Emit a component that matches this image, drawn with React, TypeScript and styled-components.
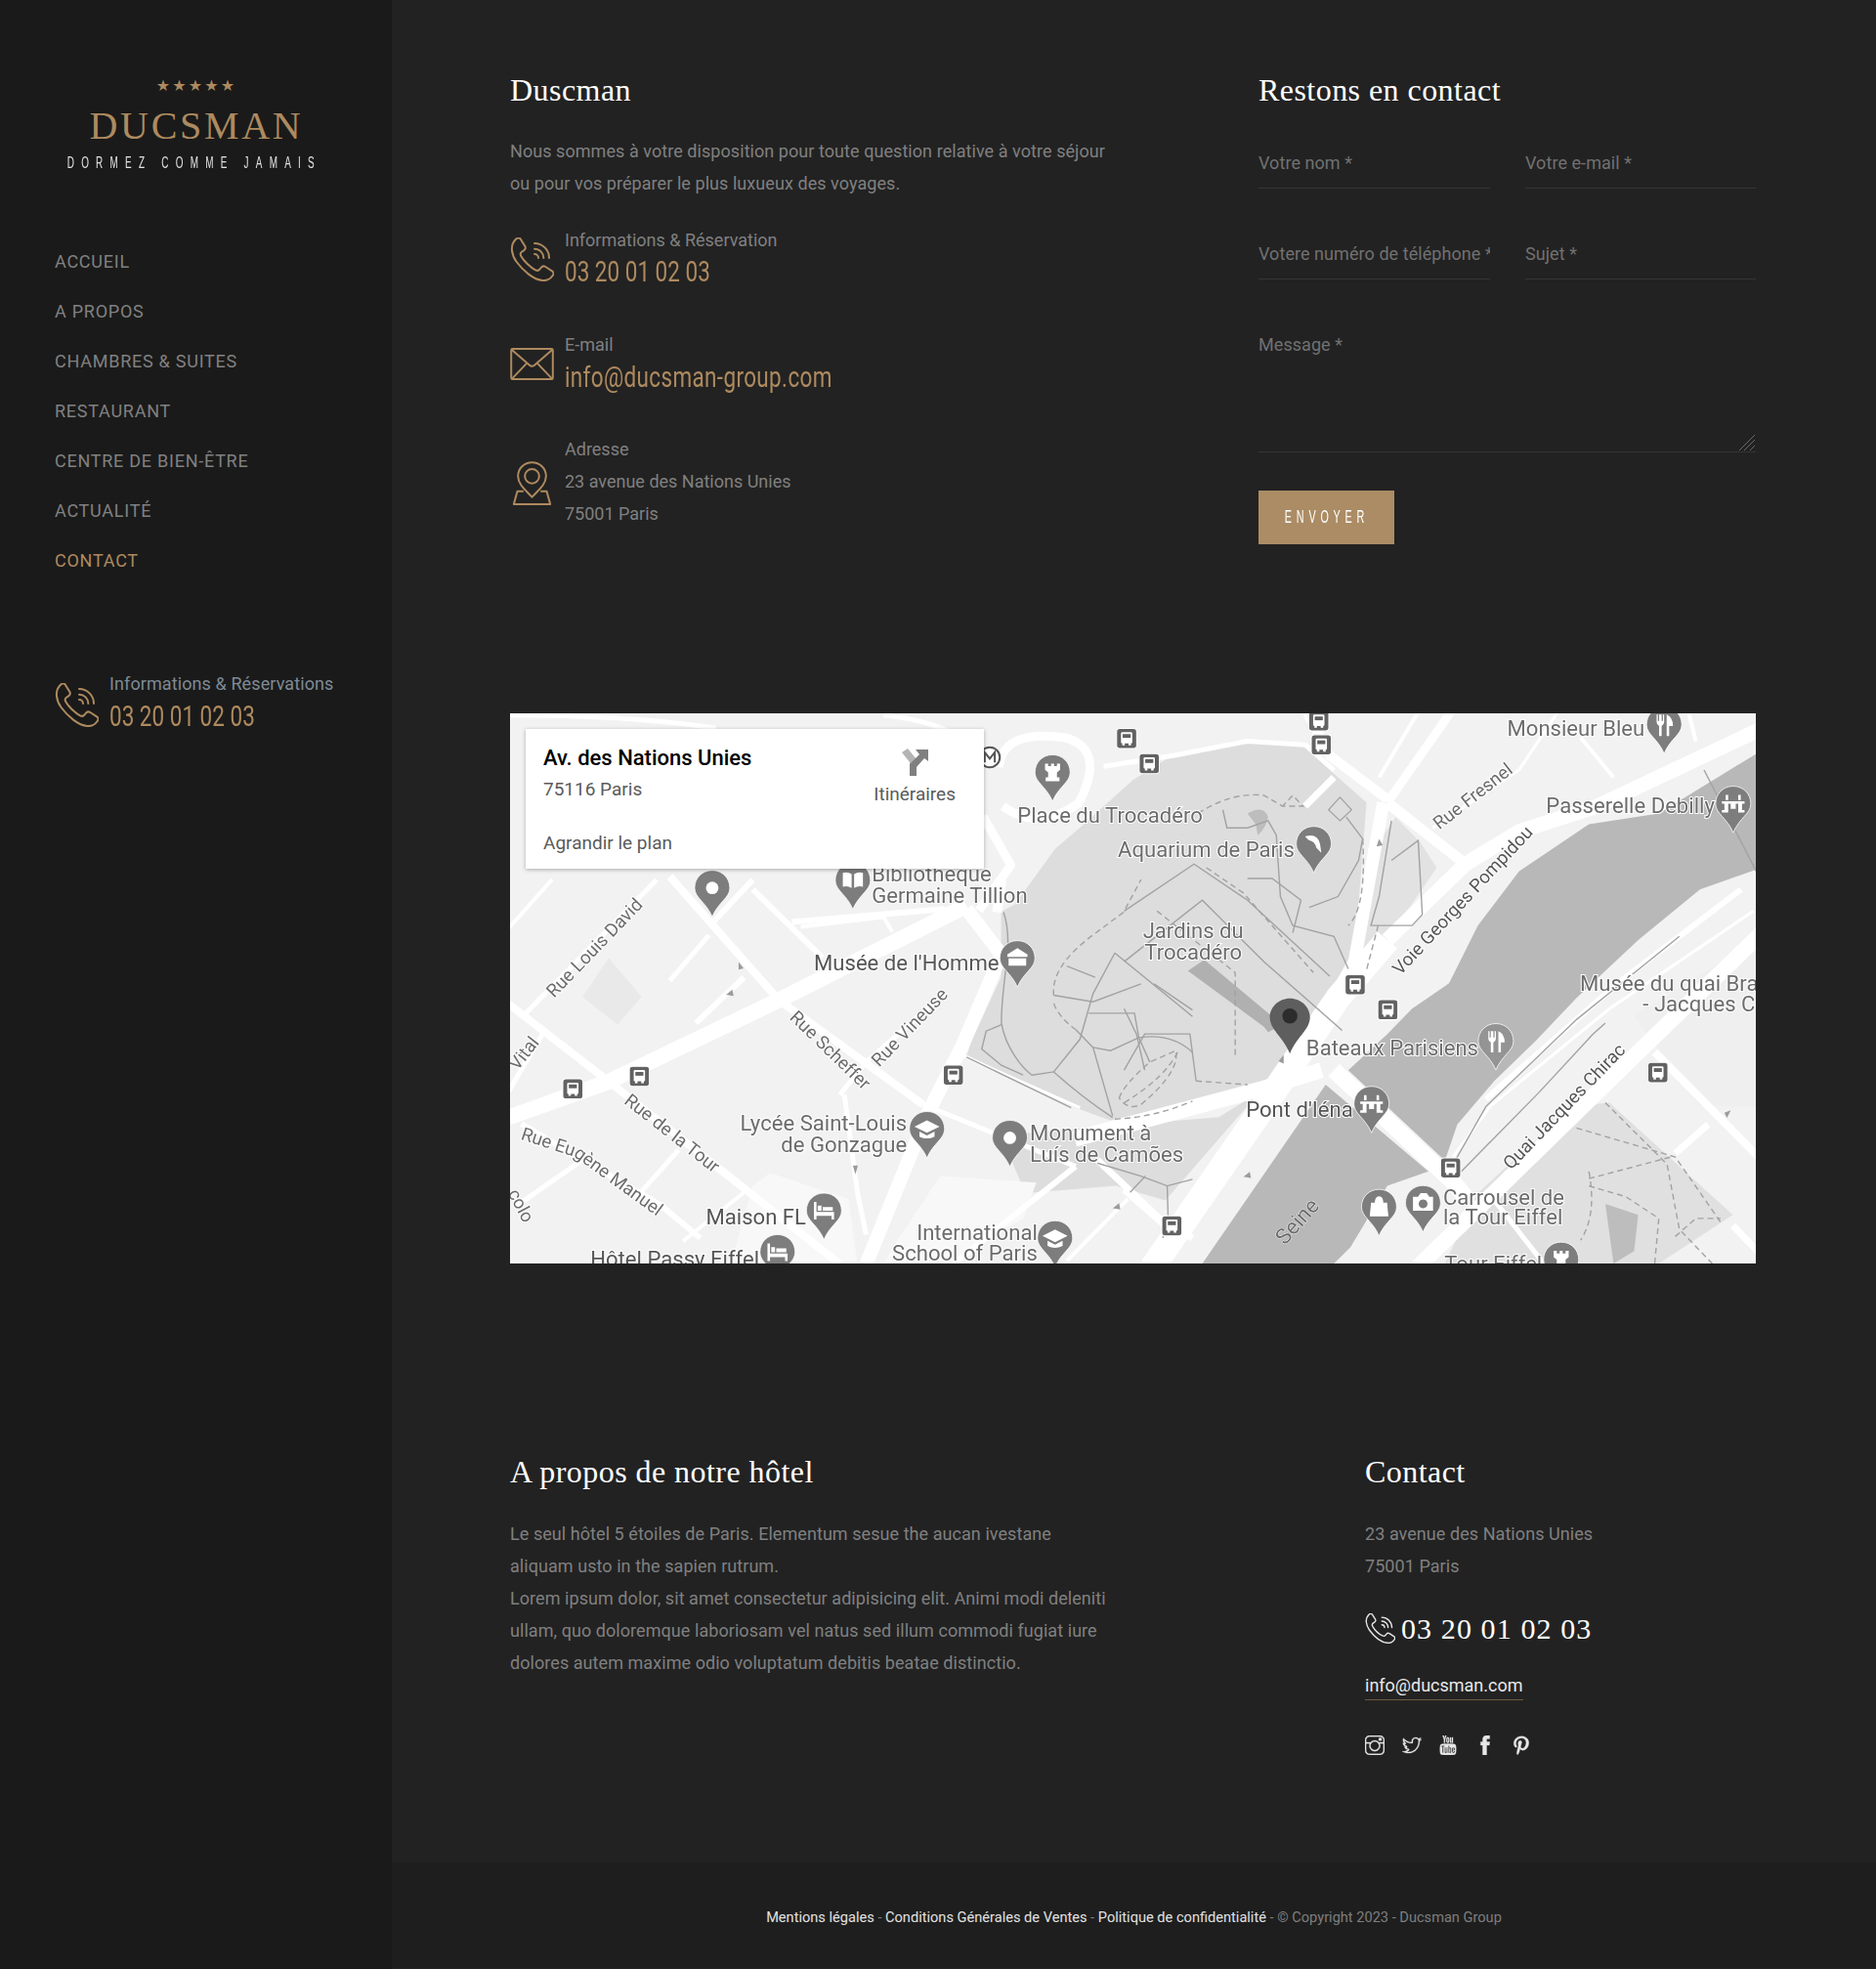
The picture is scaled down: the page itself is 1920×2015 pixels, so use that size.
import React from "react";
import styled, { createGlobalStyle } from "styled-components";
import { TfiInstagram, TfiTwitter, TfiYoutube, TfiFacebook, TfiPinterest } from "react-icons/tfi";

const GOLD = "#ae8a5f";

const GlobalStyle = createGlobalStyle`
  html, body { margin: 0; padding: 0; background: #222222; }
  * { box-sizing: border-box; }
  body { font-family: Roboto, "Liberation Sans", sans-serif; color: #808080; }
`;

const PhoneIcon = ({ color, size }: { color: string; size: number }) => (
  <svg width={size} height={size} viewBox="0 0 135 135" fill="none" stroke={color} strokeWidth={6} strokeLinejoin="round" strokeLinecap="round">
    <path d="M18 5 C24 0 30 1 33 6 L46 27 C49 32 47 37 42 40 L35 45 C31 48 31 52 34 58 C42 72 62 92 78 100 C84 103 88 102 91 98 L96 92 C99 88 104 87 109 90 L129 103 C134 107 135 112 131 117 C124 127 113 133 100 132 C72 130 40 102 20 75 C5 54 -2 24 18 5 Z" />
    <path d="M75 18 A45 45 0 0 1 120 63" />
    <path d="M75 35 A28 28 0 0 1 103 63" />
    <path d="M75 51 A12 12 0 0 1 87 63" />
  </svg>
);

const MailIcon = () => (
  <svg width="45" height="33" viewBox="0 0 135 100" fill="none" stroke={GOLD} strokeWidth={6} strokeLinejoin="round" strokeLinecap="round">
    <rect x="3" y="3" width="129" height="94" rx="4" />
    <path d="M5 6 L60 54 Q67 60 75 54 L130 6" />
    <path d="M6 95 L50 49" />
    <path d="M129 95 L85 49" />
  </svg>
);

const LocationIcon = () => (
  <svg width="45" height="46" viewBox="-7.5 0 135 138" fill="none" stroke={GOLD} strokeWidth={6} strokeLinejoin="round">
    <circle cx="60" cy="46" r="22" />
    <path d="M60 4 C36 4 17 22 17 46 C17 72 42 90 60 110 C78 90 103 72 103 46 C103 22 84 4 60 4 Z" />
    <path d="M34 92 L15 92 L4 132 L116 132 L105 92 L86 92" />
  </svg>
);

const Page = styled.div`
  display: flex;
  width: 1920px;
  height: 2015px;
  overflow: hidden;
  background: #222222;
`;

const Sidebar = styled.aside`
  flex: 0 0 401px;
  background: #1a1a1a;
  padding: 74px 0 0 56px;
`;

const Logo = styled.div`
  width: 288px;
  display: flex;
  flex-direction: column;
  align-items: center;
`;

const Stars = styled.div`
  color: ${GOLD};
  font-family: "DejaVu Sans", sans-serif;
  font-size: 16px;
  line-height: 28px;
  letter-spacing: 2.2px;
  padding-left: 2px;
`;

const Brand = styled.div`
  font-family: "Liberation Serif", serif;
  color: ${GOLD};
  font-size: 40px;
  line-height: 46px;
  letter-spacing: 2.7px;
  margin-top: 4px;
  padding-left: 2px;
`;

const Tagline = styled.div`
  color: #e2e2e2;
  font-family: "Liberation Sans", sans-serif;
  font-size: 16px;
  line-height: 20px;
  letter-spacing: 11.7px;
  white-space: nowrap;
  margin: 5px 3px 0 0;
  transform: scaleX(0.62);
`;

const Nav = styled.nav`
  display: flex;
  flex-direction: column;
  margin-top: 65px;
`;

const NavItem = styled.a<{ $active?: boolean }>`
  font-size: 18px;
  line-height: 51px;
  letter-spacing: 0.75px;
  color: ${(p) => (p.$active ? GOLD : "#818181")};
`;

const CallBox = styled.div<{ $top?: number }>`
  display: flex;
  gap: 11px;
  align-items: center;
  margin-top: ${(p) => p.$top ?? 0}px;
`;

const CallLabel = styled.div`
  font-size: 18px;
  line-height: 24px;
  letter-spacing: 0.1px;
  color: #7f8a94;
  white-space: nowrap;
`;

const Narrow = styled.div`
  font-size: 30px;
  line-height: 42px;
  color: ${GOLD};
  white-space: nowrap;
  transform: scaleX(0.75);
  transform-origin: left center;
`;

const Main = styled.main`
  flex: 1;
  display: flex;
  flex-direction: column;
  min-width: 0;
`;

const Content = styled.div`
  flex: 1;
  padding: 70px 122px 0 121px;
  display: flex;
  flex-direction: column;
`;

const ContactRow = styled.section`
  display: grid;
  grid-template-columns: 766px 509px;
  height: 660px;
`;

const Heading = styled.h2`
  margin: 0;
  font-family: "Liberation Serif", serif;
  font-weight: 400;
  font-size: 32px;
  line-height: 44px;
  letter-spacing: 0.45px;
  color: #ffffff;
`;

const Paragraph = styled.p`
  margin: 0;
  font-size: 18px;
  line-height: 33px;
  letter-spacing: 0.06px;
  color: #808080;
`;

const Intro = styled(Paragraph)`
  margin-top: 24px;
  width: 640px;
`;

const InfoItem = styled.div`
  display: flex;
  gap: 11px;
  align-items: center;
  width: 500px;
  svg {
    flex: 0 0 auto;
    margin-top: 4px;
  }
`;

const InfoText = styled.div`
  font-size: 18px;
  line-height: 33px;
  color: #808080;
  display: flex;
  flex-direction: column;
`;

const InfoList = styled.div`
  display: flex;
  flex-direction: column;
  gap: 38.5px;
  margin-top: 25px;
`;

const InfoValue = styled(Narrow)`
  line-height: 38px;
  margin-top: -3px;
`;

const EmailValue = styled(InfoValue)`
  letter-spacing: 0.47px;
  margin-top: -2px;
`;

const FormGrid = styled.form`
  display: grid;
  grid-template-columns: 237px 236px;
  column-gap: 36px;
  row-gap: 40px;
  margin-top: 26px;
`;

const Field = styled.input`
  width: 100%;
  height: 53px;
  background: transparent;
  border: 0;
  border-bottom: 1px solid #353535;
  outline: none;
  padding: 0;
  font-family: inherit;
  font-size: 18px;
  letter-spacing: 0.06px;
  color: #808080;
  &::placeholder { color: #717171; opacity: 1; }
`;

const MessageWrap = styled.div`
  grid-column: 1 / 3;
  position: relative;
`;

const Message = styled.textarea`
  width: 100%;
  height: 137px;
  display: block;
  resize: none;
  background: transparent;
  border: 0;
  border-bottom: 1px solid #353535;
  outline: none;
  padding: 16px 0 0;
  font-family: inherit;
  font-size: 18px;
  letter-spacing: 0.06px;
  &::placeholder { color: #717171; opacity: 1; }
`;

const ResizeGrip = styled.svg`
  position: absolute;
  right: 0;
  bottom: 1px;
`;

const SendButton = styled.button`
  display: block;
  width: 139px;
  height: 55px;
  margin-top: 39px;
  border: 0;
  background: #ab8c65;
  color: #ffffff;
  padding: 0 0 0 2px;
`;

const SendLabel = styled.span`
  display: inline-block;
  font-family: "Liberation Sans", sans-serif;
  font-size: 18px;
  letter-spacing: 8px;
  transform: scaleX(0.6);
  white-space: nowrap;
  margin: 0 -30px;
`;

const MapBox = styled.div`
  position: relative;
  width: 1275px;
  height: 563px;
  background: #f2f2f2;
  overflow: hidden;
`;

const MapCard = styled.div`
  position: absolute;
  left: 16px;
  top: 16px;
  width: 469px;
  height: 143px;
  background: #ffffff;
  box-shadow: 0 1px 4px rgba(0, 0, 0, 0.3);
  padding: 16px 18px;
  font-family: Roboto, sans-serif;
`;

const CardTitle = styled.div`
  font-size: 22px;
  font-weight: 500;
  line-height: 28px;
  color: #000000;
`;

const CardLine = styled.div`
  font-size: 19px;
  line-height: 24px;
  margin-top: 6px;
  color: #5b5b5b;
`;

const CardLink = styled(CardLine)`
  margin-top: 31px;
`;

const Directions = styled.div`
  position: absolute;
  right: 29px;
  top: 18px;
  display: flex;
  flex-direction: column;
  align-items: center;
  gap: 7px;
  font-size: 19px;
  color: #5b5b5b;
`;

const FooterRow = styled.section`
  display: grid;
  grid-template-columns: 875px 400px;
  margin-top: 191px;
`;

const AboutText = styled(Paragraph)`
  margin-top: 25px;
  width: 660px;
`;

const ContactText = styled(AboutText)`
  width: 400px;
`;

const BigPhone = styled.div`
  display: flex;
  align-items: center;
  gap: 6px;
  margin-top: 31px;
  font-family: "Liberation Serif", serif;
  font-size: 30px;
  line-height: 33px;
  letter-spacing: 1.1px;
  color: #ffffff;
`;

const MailLink = styled.a`
  display: inline-block;
  margin-top: 30px;
  padding-bottom: 2px;
  font-size: 18px;
  line-height: 24px;
  color: #e8e8e8;
  border-bottom: 1px solid #6d5a42;
`;

const Socials = styled.div`
  display: flex;
  gap: 17.5px;
  margin-top: 36px;
  color: #e6e6e6;
  font-size: 20px;
  svg {
    display: block;
    stroke: currentColor;
    stroke-width: 0.25;
  }
`;

const BottomBar = styled.footer`
  flex: 0 0 108px;
  background: #1e1e1e;
  margin-bottom: 1px;
  display: flex;
  align-items: center;
  justify-content: center;
  padding-top: 4px;
  font-size: 14.6px;
  color: #7e7e7e;
  white-space: nowrap;
`;

const BarLink = styled.a`
  color: #e2e2e2;
`;

const Land = "#f2f2f2";
const Park = "#dddddd";
const Water = "#b8b8b8";
const Line = "#a2a2a2";

const Z4 = "translate(404.7 564.2) scale(.3175 .2594)";
const Z6 = "translate(404.7 700.4) scale(.3474 .2594)";
const Z7 = "translate(895 564.2) scale(.3275 .2879)";

const Road = ({ d, w }: { d: string; w: number }) => (
  <path d={d} fill="none" stroke="#ffffff" strokeWidth={w} vectorEffect="non-scaling-stroke" strokeLinejoin="round" />
);

const Trail = ({ d, dash }: { d: string; dash?: boolean }) => (
  <path d={d} fill="none" stroke={Line} strokeWidth={1.4} strokeDasharray={dash ? "6 4" : undefined} vectorEffect="non-scaling-stroke" />
);

const Pin = ({ x, y, glyph, shade = "#7d7d7d" }: { x: number; y: number; glyph?: string; shade?: string }) => (
  <g transform={`translate(${x} ${y})`}>
    <path d="M0 -14 C-8 -14 -14 -8 -14 0 C-14 8 -5 11 0 23 C5 11 14 8 14 0 C14 -8 8 -14 0 -14 Z" fill={shade} stroke="#ffffff" strokeWidth={0.6} />
    {glyph === "dot" && <circle r={5} fill="#ffffff" />}
    {glyph === "rook" && <path d="M-6 -7 H-3.5 V-5 H-1.2 V-7 H1.2 V-5 H3.5 V-7 H6 V-2 L3.5 0 V4 H5.5 V7 H-5.5 V4 H-3.5 V0 L-6 -2 Z" fill="#ffffff" />}
    {glyph === "book" && <path d="M-8 -6 Q-4 -7 -1 -5 V6 Q-4 4 -8 5 Z M8 -6 Q4 -7 1 -5 V6 Q4 4 8 5 Z" fill="#ffffff" />}
    {glyph === "museum" && <path d="M0 -8 L8 -3 V-1 H-8 V-3 Z M-7 0 H7 V6 H-7 Z" fill="#ffffff" />}
    {glyph === "grad" && <path d="M0 -7 L10 -2 L0 3 L-10 -2 Z M-6 2 L0 5 L6 2 V6 Q0 9 -6 6 Z" fill="#ffffff" />}
    {glyph === "bed" && <path d="M-8 -7 H-6 V1 H8 V7 H6 V4 H-6 V7 H-8 Z M-5 -4 H-2 V0 H-5 Z M-1 -3 H7 V0 H-1 Z" fill="#ffffff" />}
    {glyph === "fork" && <path d="M-6 -8 V-2 Q-6 0 -4 1 V9 H-2 V1 Q0 0 0 -2 V-8 H-1 V-3 H-2 V-8 H-4 V-3 H-5 V-8 Z M2 9 V-8 Q7 -6 7 1 H4 V9 Z" fill="#ffffff" />}
    {glyph === "bridge" && <path d="M-9 -2 H9 V0 H7 V5 H9 V7 H4 V0 H2 V4 H-2 V0 H-4 V7 H-9 V5 H-7 V0 H-9 Z M-6 -7 H-4 V-3 H-6 Z M4 -7 H6 V-3 H4 Z" fill="#ffffff" />}
    {glyph === "shop" && <path d="M-6 -3 H6 L7 7 H-7 Z M-3 -3 Q-3 -8 0 -8 Q3 -8 3 -3" fill="#ffffff" stroke="#ffffff" strokeWidth={0.8} />}
    {glyph === "camera" && <path d="M-8 -5 H-4 L-2 -8 H3 L5 -5 H8 V6 H-8 Z M0 -3 A3.5 3.5 0 1 0 0.1 -3 Z" fill="#ffffff" fillRule="evenodd" />}
    {glyph === "dolphin" && <path d="M-7 -6 Q3 -9 5 0 L6 7 L2 3 Q1 -2 -4 -3 Z" fill="#ffffff" />}
  </g>
);

const Bus = ({ x, y }: { x: number; y: number }) => (
  <g transform={`translate(${x} ${y})`}>
    <rect x={-8} y={-8} width={16} height={16} rx={2.5} fill="#626262" stroke="#ffffff" strokeWidth={0.8} />
    <rect x={-4.5} y={-5} width={9} height={9} rx={1} fill="#ffffff" />
    <rect x={-3.2} y={-3.5} width={6.4} height={3} fill="#626262" />
    <rect x={-3.5} y={3.5} width={2} height={2} fill="#ffffff" />
    <rect x={1.5} y={3.5} width={2} height={2} fill="#ffffff" />
  </g>
);

const Label = styled.text<{ $dark?: boolean }>`
  font-family: Roboto, sans-serif;
  font-size: 17.2px;
  fill: ${(p) => (p.$dark ? "#555555" : "#6c6c6c")};
  stroke: #ffffff;
  stroke-width: 1.6px;
  paint-order: stroke;
`;

const Street = styled(Label)`
  font-size: 14.5px;
`;

const MapDrawing = () => (
  <svg width="1275" height="563" viewBox="406 568 992 438" style={{ display: "block", filter: "blur(0.45px)" }}>
    <rect x="406" y="568" width="992" height="438" fill={Land} />

    {/* parks and water, traced in the crop coordinates */}
    <path d="M808 720 L840 676 L862 657 L902 621 L934 601 L993 590 L1039 593 L1062 616 L1088 639 L1078 766 L1059 797 L1006 864 L884 892 L856 882 L770 840 L773 830 L797 778 L797 726 Z" fill={Park} />
    <g transform={Z7}>
      <path d="M-300 1180 L230 1130 L330 1060 L100 1360 L-20 1320 L-240 1340 Z" fill={Park} />
      <path d="M660 300 L720 370 L760 440 L640 640 L570 740 L600 400 Z" fill="#e2e2e2" />
      <path d="M1090 1100 L1180 1090 L1480 1400 L1300 1535 L780 1535 L860 1340 Z" fill="#e0e0e0" />
      <path d="M1240 850 L1537 640 L1537 1100 L1400 1100 Z" fill="#efefef" />
      <path d="M545 1000 L640 900 L700 830 L790 760 L860 600 L960 450 L1130 320 L1300 290 L1537 125 L1537 445 L1400 500 L1250 640 L1100 800 L1000 920 L900 1030 L810 1150 L780 1250 Z" fill={Water} />
      <path d="M190 1535 L490 1040 L740 1280 L640 1320 L550 1490 L510 1535 Z" fill={Water} />
      <path d="M155 725 L195 695 L385 875 L350 895 L340 880 Z" fill="#b0b0b0" />
      <path d="M300 290 Q340 265 350 300 Q345 330 325 350 L320 320 Z" fill="#bdbdbd" />
      <path d="M1170 1370 L1250 1400 L1240 1500 L1190 1535 Z" fill="#bdbdbd" />
    </g>
    <g transform={Z6}>
      <path d="M170 360 L230 240 L305 360 L250 445 Z" fill="#e9e9e9" />
      <path d="M560 940 L600 900 L780 980 L800 1180 L510 1180 Z" fill="#f8f8f8" />
      <path d="M880 1130 L990 910 L1210 930 L1180 1040 L1000 1180 L860 1180 Z" fill="#f8f8f8" />
    </g>

    {/* streets */}
    <g transform={Z7}>
      <Road d="M60 1560 L340 1100 L520 800 L640 640" w={26} />
      <Road d="M640 640 L830 430 L960 340 L1150 270 L1560 50" w={15} />
      <Road d="M630 260 L560 700 L500 820 L400 1000" w={13} />
      <Road d="M640 250 L500 130 L440 0" w={10} />
      <Road d="M640 260 L830 430" w={11} />
      <Road d="M640 260 L800 0" w={9} />
      <Road d="M720 0 L620 190" w={4} />
      <Road d="M-50 160 L120 130 L300 90 L440 100 L510 170" w={5} />
      <Road d="M510 190 L440 270" w={7} />
      <Road d="M510 1000 L800 1310 L830 1350" w={17} />
      <Road d="M-120 1190 L340 1050 L480 1000" w={16} />
      <Road d="M700 1560 L1250 950 L1560 610" w={16} />
      <Road d="M880 1080 L940 1020 L1200 760 L1500 500" w={6} />
      <Road d="M800 1240 L890 1100 L1180 830 L1530 560" w={3} />
      <Road d="M1290 950 L1560 1260" w={8} />
      <Road d="M1420 1150 L1340 1230" w={7} />
      <Road d="M1110 80 L1190 190" w={4} />
      <Road d="M1370 0 L1390 90" w={4} />
      <Road d="M960 170 L1060 0" w={3} />
      <Road d="M750 330 L960 170" w={3} />
      <Road d="M1480 1430 L1540 1500" w={7} />
      <Road d="M0 1330 L100 1430 L140 1480" w={7} />
      <Road d="M880 1330 L1020 1535" w={5} />
    </g>
    <g transform={Z6}>
      <Road d="M0 730 L230 620 L620 370 L1050 80" w={16} />
      <Road d="M1050 90 L1130 230 L1040 510 L960 720 L820 1180" w={14} />
      <Road d="M1130 0 L1120 100" w={10} />
      <Road d="M370 -10 L620 370 L950 690" w={8} />
      <Road d="M950 690 L1300 880" w={5} />
      <Road d="M-20 360 L230 620 L760 1180" w={8} />
      <Road d="M340 0 L40 410" w={5} />
      <Road d="M100 0 L0 150" w={4} />
      <Road d="M560 0 L470 130" w={6} />
      <Road d="M560 30 L720 240" w={6} />
      <Road d="M650 130 L1000 90" w={6} />
      <Road d="M670 145 L860 115 L880 160" w={4} />
      <Road d="M540 300 L430 440" w={6} />
      <Road d="M460 170 L370 310" w={5} />
      <Road d="M760 660 L820 560 L1000 350" w={5} />
      <Road d="M770 660 L800 960 L820 1090" w={5} />
      <Road d="M80 470 L0 650" w={5} />
      <Road d="M30 750 L350 1000 L440 1100" w={6} />
      <Road d="M170 860 L20 1000" w={5} />
      <Road d="M390 830 L290 980" w={5} />
      <Road d="M540 960 L400 1110" w={4} />
      <Road d="M1300 880 L1150 1040 L1020 1180" w={6} />
      <Road d="M1350 860 L1500 1050 L1568 1100" w={7} />
      <Road d="M1420 980 L1280 1170" w={4} />
      <Road d="M1040 540 L1310 700" w={3} />
    </g>
    <g transform={Z4}>
      <Road d="M1190 330 L1260 480 L1180 620" w={9} />
      <Road d="M1230 180 Q1240 60 1400 90 Q1500 130 1430 290 Q1330 380 1240 300" w={9} />
      <Road d="M0 20 Q300 20 520 60" w={5} />
      <Road d="M940 20 Q1100 40 1180 130" w={5} />
    </g>

    {/* garden paths */}
    <g transform={Z6}>
      <Trail d="M1135 100 C1160 200 1130 300 1130 440 C1140 520 1180 580 1200 600 L1250 590 C1300 650 1340 690 1385 730" />
      <Trail d="M1130 445 L1095 465 L1085 520 L1130 570 L1180 600" />
      <Trail d="M1250 590 L1310 490 L1340 350 L1390 225" />
      <Trail d="M1250 355 L1340 375 L1450 320" />
      <Trail d="M1280 265 L1345 300" />
      <Trail d="M1330 410 L1435 410 L1445 485 L1470 560" />
      <Trail d="M1300 460 L1340 515 L1385 725" />
      <Trail d="M1340 515 L1380 525 L1445 485 Q1520 470 1568 530" />
      <Trail d="M1250 355 C1245 290 1280 230 1340 170 L1410 100 L1450 0" dash />
      <Trail d="M1250 380 Q1260 420 1300 460" dash />
      <Trail d="M1400 670 Q1410 630 1470 560 L1530 525 Q1540 590 1450 690 Q1420 710 1400 670 Z" dash />
      <Trail d="M1390 735 Q1480 730 1568 680" dash />
      <Trail d="M1390 225 L1568 420" />
      <Trail d="M1480 320 L1568 400" />
      <Trail d="M1050 545 L1290 700" />
      <Trail d="M1510 940 L1512 1030 L1500 1100" />
      <Trail d="M1460 910 L1425 960" />
      <Trail d="M1350 870 L1450 910 L1510 940 L1568 920" />
    </g>
    <g transform={Z7}>
      <Trail d="M180 290 Q260 230 340 240 L385 270 L435 270 L410 240 L385 270" dash />
      <Trail d="M240 280 L250 330 L300 330 L350 310 L370 350 L380 520 L410 600 L510 630 L545 720" />
      <Trail d="M300 470 L360 470 L430 530 L410 620" />
      <path d="M497 280 L525 245 L553 280 L525 310 Z" fill="none" stroke={Line} strokeWidth={1.2} vectorEffect="non-scaling-stroke" />
      <Trail d="M540 300 L580 360 L570 420 L520 520 L450 550" />
      <Trail d="M580 360 Q590 550 545 600" dash />
      <Trail d="M0 560 L170 430 L300 530 L500 740" />
      <Trail d="M0 700 L190 530 L340 700 L530 890" />
      <Trail d="M200 440 L290 510 L460 730" dash />
      <Trail d="M80 560 L270 730 L270 960" dash />
      <Trail d="M0 830 L30 900 L50 1000" />
      <Trail d="M0 1000 L50 900 L160 900 L175 1030" />
      <Trail d="M0 1090 Q100 1020 130 950" dash />
      <Trail d="M175 1030 L300 1040" dash />
      <Trail d="M650 310 L620 520 L600 600 L700 600 L725 570" />
      <Trail d="M650 420 L715 365 L725 570" />
      <Trail d="M590 720 L620 590" dash />
      <Trail d="M1100 1160 L1340 1240 L1450 1420" dash />
      <Trail d="M1170 1090 L1320 1260 L1350 1440 L1430 1535" dash />
      <Trail d="M1130 1300 L1330 1240" dash />
      <Trail d="M1130 1320 L1220 1350 L1300 1410 L1290 1535" dash />
      <Trail d="M1130 1280 Q1150 1400 1110 1470" dash />
      <Trail d="M1340 1460 L1390 1410 L1450 1410" dash />
      <Trail d="M820 1280 L1010 1060 L1140 900 L1170 870" />
      <Trail d="M780 1300 L880 1100 L1100 860 L1350 630" />
      <Trail d="M1410 170 L1537 450" />
    </g>

    {/* grey arrows on one-way streets */}
    <g fill="#9b9b9b">
      <path d="M588 766 l4 5 l-4 1 z" />
      <path d="M578 792 l5 -4 l1 5 z" />
      <path d="M1098 668 l3 5 l-5 1 z" />
      <path d="M990 937 l5 -4 l1 5 z" />
      <path d="M886 962 l5 -4 l1 5 z" />
      <path d="M679 928 l4 0 l-2 7 z" />
      <path d="M1378 884 l-5 2 l2 4 z" />
      <path d="M1022 840 l-4 5 l4 2 z" />
    </g>

    {/* bus stops */}
    {[[897, 588], [915, 608], [1050, 574], [1052, 593], [1079, 784], [1105, 804], [1155, 930], [1320, 854], [933, 976], [759, 856], [509, 857], [456, 867]].map(([x, y]) => (
      <Bus key={`${x}-${y}`} x={x} y={y} />
    ))}
    <g transform="translate(788 603)">
      <circle r={8} fill="#ffffff" stroke="#555555" strokeWidth={1.6} />
      <path d="M-4 4 V-4 L0 1 L4 -4 V4" fill="none" stroke="#555555" strokeWidth={1.6} />
    </g>

    {/* points of interest */}
    <Pin x={838} y={615} glyph="rook" />
    <Pin x={1046} y={672} glyph="dolphin" />
    <Pin x={567} y={707} glyph="dot" />
    <Pin x={679} y={701} glyph="book" />
    <Pin x={810} y={763} glyph="museum" />
    <Pin x={738} y={899} glyph="grad" />
    <Pin x={804} y={906} glyph="dot" />
    <Pin x={656} y={964} glyph="bed" />
    <Pin x={619} y={997} glyph="bed" />
    <Pin x={840} y={986} glyph="grad" />
    <Pin x={1191} y={829} glyph="fork" shade="#949494" />
    <Pin x={1092} y={879} glyph="bridge" />
    <Pin x={1098} y={961} glyph="shop" />
    <Pin x={1133} y={958} glyph="camera" />
    <Pin x={1243} y={1003} glyph="rook" />
    <Pin x={1325} y={577} glyph="fork" />
    <Pin x={1380} y={640} glyph="bridge" />

    <Label x={810} y={655}>Place du Trocadéro</Label>
    <Label x={890} y={682}>Aquarium de Paris</Label>
    <Label x={1200} y={586}>Monsieur Bleu</Label>
    <Label x={1231} y={647}>Passerelle Debilly</Label>
    <Label x={950} y={747} textAnchor="middle">Jardins du</Label>
    <Label x={950} y={764} textAnchor="middle">Trocadéro</Label>
    <Label x={648} y={773} $dark>Musée de l'Homme</Label>
    <Label x={694} y={702}>Bibliothèque</Label>
    <Label x={694} y={719}>Germaine Tillion</Label>
    <Label x={1040} y={840}>Bateaux Parisiens</Label>
    <Label x={992} y={889} $dark>Pont d'Iéna</Label>
    <Label x={722} y={900} textAnchor="end">Lycée Saint-Louis</Label>
    <Label x={722} y={917} textAnchor="end">de Gonzague</Label>
    <Label x={820} y={908}>Monument à</Label>
    <Label x={820} y={925}>Luís de Camões</Label>
    <Label x={562} y={975} $dark>Maison FL</Label>
    <Label x={470} y={1008} $dark>Hôtel Passy Eiffel</Label>
    <Label x={826} y={987} textAnchor="end">International</Label>
    <Label x={826} y={1004} textAnchor="end">School of Paris</Label>
    <Label x={1149} y={959}>Carrousel de</Label>
    <Label x={1149} y={975}>la Tour Eiffel</Label>
    <Label x={1258} y={789}>Musée du quai Branly</Label>
    <Label x={1308} y={805}>- Jacques Chirac</Label>
    <Label x={1150} y={1012}>Tour Eiffel</Label>

    <Street transform="translate(441 795) rotate(-46)">Rue Louis David</Street>
    <Street transform="translate(628 811) rotate(44)">Rue Scheffer</Street>
    <Street transform="translate(700 850) rotate(-46)">Rue Vineuse</Street>
    <Street transform="translate(496 878) rotate(38)">Rue de la Tour</Street>
    <Street transform="translate(414 907) rotate(18)">Rue Eu</Street>
    <Street transform="translate(456 920) rotate(36)">gène Manuel</Street>
    <Street transform="translate(412 853) rotate(-52)">Vital</Street>
    <Street transform="translate(404 950) rotate(62)">colo</Street>
    <Street $dark transform="translate(1115 777) rotate(-47)">Voie Georges Pompidou</Street>
    <Street transform="translate(1146 661) rotate(-38)">Rue Fresnel</Street>
    <Street $dark transform="translate(1203 932) rotate(-46)">Quai Jacques Chirac</Street>
    <Label transform="translate(1023 992) rotate(-48)" style={{ strokeWidth: 0.6 }}>Seine</Label>

    {/* selected place */}
    <g transform="translate(1027 812)">
      <path d="M0 -17 C-9 -17 -16 -10 -16 -2 C-16 8 -5 14 0 27 C5 14 16 8 16 -2 C16 -10 9 -17 0 -17 Z" fill="#5e5e5e" />
      <circle cy={-3} r={6} fill="#2c2c2c" />
    </g>
  </svg>
);

export default function App() {
  return (
    <Page>
      <GlobalStyle />
      <Sidebar>
        <Logo>
          <Stars>★★★★★</Stars>
          <Brand>DUCSMAN</Brand>
          <Tagline>DORMEZ COMME JAMAIS</Tagline>
        </Logo>
        <Nav>
          <NavItem>ACCUEIL</NavItem>
          <NavItem>A PROPOS</NavItem>
          <NavItem>CHAMBRES &amp; SUITES</NavItem>
          <NavItem>RESTAURANT</NavItem>
          <NavItem>CENTRE DE BIEN-ÊTRE</NavItem>
          <NavItem>ACTUALITÉ</NavItem>
          <NavItem $active>CONTACT</NavItem>
        </Nav>
        <CallBox $top={89}>
          <PhoneIcon color={GOLD} size={45} />
          <div>
            <CallLabel>Informations &amp; Réservations</CallLabel>
            <Narrow>03 20 01 02 03</Narrow>
          </div>
        </CallBox>
      </Sidebar>
      <Main>
        <Content>
          <ContactRow>
            <div>
              <Heading>Duscman</Heading>
              <Intro>
                Nous sommes à votre disposition pour toute question relative à votre séjour
                <br />
                ou pour vos préparer le plus luxueux des voyages.
              </Intro>
              <InfoList>
                <InfoItem>
                  <PhoneIcon color={GOLD} size={45} />
                  <InfoText>
                    Informations &amp; Réservation
                    <InfoValue>03 20 01 02 03</InfoValue>
                  </InfoText>
                </InfoItem>
                <InfoItem>
                  <MailIcon />
                  <InfoText>
                    E-mail
                    <EmailValue>info@ducsman-group.com</EmailValue>
                  </InfoText>
                </InfoItem>
                <InfoItem>
                  <LocationIcon />
                  <InfoText>
                    Adresse
                    <span>23 avenue des Nations Unies</span>
                    <span>75001 Paris</span>
                  </InfoText>
                </InfoItem>
              </InfoList>
            </div>
            <div>
              <Heading>Restons en contact</Heading>
              <FormGrid>
                <Field placeholder="Votre nom *" />
                <Field placeholder="Votre e-mail *" />
                <Field placeholder="Votere numéro de téléphone *" />
                <Field placeholder="Sujet *" />
                <MessageWrap>
                  <Message placeholder="Message *" />
                  <ResizeGrip width="18" height="18" viewBox="0 0 18 18" stroke="#6a6a6a" strokeWidth="1">
                    <path d="M1 17 L17 1 M6 17 L17 6 M12 17 L17 12" />
                  </ResizeGrip>
                </MessageWrap>
              </FormGrid>
              <SendButton type="button">
                <SendLabel>ENVOYER</SendLabel>
              </SendButton>
            </div>
          </ContactRow>
          <MapBox>
            <MapDrawing />
            <MapCard>
              <CardTitle>Av. des Nations Unies</CardTitle>
              <CardLine>75116 Paris</CardLine>
              <CardLink>Agrandir le plan</CardLink>
              <Directions>
                <svg width="30" height="30" viewBox="0 0 30 30">
                  <path d="M2 6 L8 2 L17 13 L17 30 L10 30 L10 16 Z" fill="#b4b4b4" />
                  <path d="M10 30 V18 L20 8 L16 3 H29 V15 L25 12 L17 21 V30 Z" fill="#808080" />
                </svg>
                Itinéraires
              </Directions>
            </MapCard>
          </MapBox>
          <FooterRow>
            <div>
              <Heading>A propos de notre hôtel</Heading>
              <AboutText>
                Le seul hôtel 5 étoiles de Paris. Elementum sesue the aucan ivestane
                <br />
                aliquam usto in the sapien rutrum.
                <br />
                Lorem ipsum dolor, sit amet consectetur adipisicing elit. Animi modi deleniti
                <br />
                ullam, quo doloremque laboriosam vel natus sed illum commodi fugiat iure
                <br />
                dolores autem maxime odio voluptatum debitis beatae distinctio.
              </AboutText>
            </div>
            <div>
              <Heading>Contact</Heading>
              <ContactText>
                23 avenue des Nations Unies
                <br />
                75001 Paris
              </ContactText>
              <BigPhone>
                <PhoneIcon color="#e6e6e6" size={31} />
                03 20 01 02 03
              </BigPhone>
              <MailLink>info@ducsman.com</MailLink>
              <Socials>
                <TfiInstagram />
                <TfiTwitter />
                <TfiYoutube />
                <TfiFacebook />
                <TfiPinterest />
              </Socials>
            </div>
          </FooterRow>
        </Content>
        <BottomBar>
          <span>
            <BarLink>Mentions légales</BarLink> - <BarLink>Conditions Générales de Ventes</BarLink> - <BarLink>Politique de confidentialité</BarLink> - © Copyright 2023 - Ducsman Group
          </span>
        </BottomBar>
      </Main>
    </Page>
  );
}
